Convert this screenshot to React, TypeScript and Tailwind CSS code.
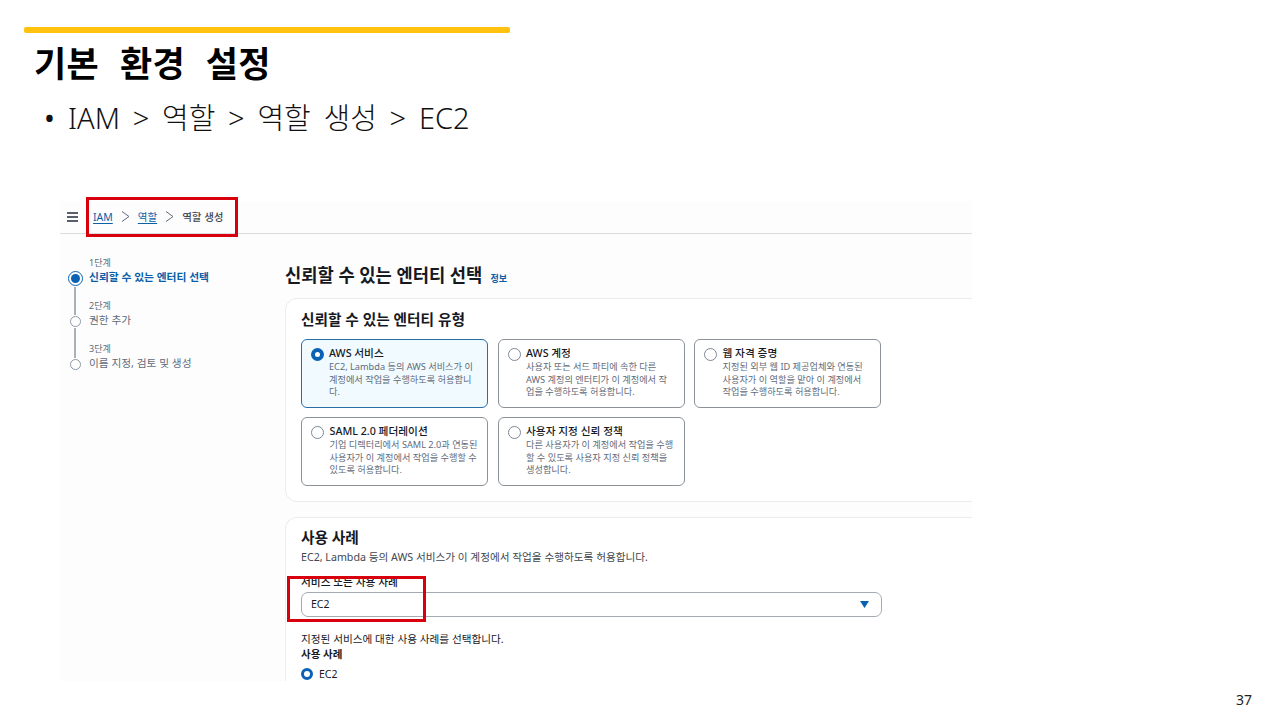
const FONT = "[font-family:'Noto_Sans','Noto_Sans_CJK_KR',sans-serif]";

interface TileProps {
  title: string;
  lines: string[];
  selected?: boolean;
}

const Radio = ({ selected, small }: { selected?: boolean; small?: boolean }) =>
  selected ? (
    <span className={small ? "block h-[12px] w-[12px] shrink-0 rounded-full border-[3.5px] border-[#0b62b4] bg-white" : "block h-[13px] w-[13px] shrink-0 rounded-full border-[4px] border-[#0b62b4] bg-white"} />
  ) : (
    <span className="block h-[13px] w-[13px] shrink-0 rounded-full border border-[#7d8998] bg-white" />
  );

const Tile = ({ title, lines, selected }: TileProps) => (
  <div
    className={
      selected
        ? "flex h-[69px] w-[187px] shrink-0 gap-[5.5px] rounded-[6px] border-[1.5px] border-[#2a6ea8] bg-[#f1faff] pl-[8.5px] pt-[6px]"
        : "flex h-[69px] w-[187px] shrink-0 gap-[5.5px] rounded-[6px] border border-[#8d9299] bg-white pl-[9px] pt-[6px]"
    }
  >
    <div className="pt-[2px]">
      <Radio selected={selected} />
    </div>
    <div>
      <div className="mb-[1px] text-[10.7px] leading-[14px] font-medium whitespace-nowrap text-[#16191f]">{title}</div>
      {lines.map((l) => (
        <div key={l} className="text-[9.2px] leading-[12.7px] whitespace-nowrap text-[#5f6b7a]">
          {l}
        </div>
      ))}
    </div>
  </div>
);

const Step = ({ label, title, active, last }: { label: string; title: string; active?: boolean; last?: boolean }) => (
  <div className="flex h-[43px] gap-[7px]">
    <div className="flex w-[14px] shrink-0 flex-col items-center">
      {active ? (
        <span className="mt-[15px] block h-[15px] w-[15px] shrink-0 rounded-full border-[1.5px] border-[#0b62b4] bg-white p-[2px]">
          <span className="block h-full w-full rounded-full bg-[#0b62b4]" />
        </span>
      ) : (
        <>
          <span className="mb-[1px] block h-[16px] w-[1.5px] shrink-0 bg-[#a8b0ba]" />
          <span className="block h-[11px] w-[11px] shrink-0 rounded-full border border-[#8d99a8] bg-white" />
        </>
      )}
      {!last && <span className="mt-[1px] block w-[1.5px] grow bg-[#a8b0ba]" />}
    </div>
    <div>
      <div className="text-[9px] leading-[13px] text-[#5f6b7a]">{label}</div>
      <div className={active ? "text-[10.75px] leading-[16px] font-bold text-[#0b5fa8]" : "text-[10.7px] leading-[16px] text-[#5f6b7a]"}>{title}</div>
    </div>
  </div>
);

export default function App() {
  return (
    <div className={`relative h-[720px] w-[1280px] overflow-hidden bg-white ${FONT}`}>
      {/* slide header */}
      <div className="pl-[24px] pt-[27px]">
        <div className="h-[6px] w-[486px] rounded-[2px] bg-[#ffc20e]" />
        <h1 className="mt-[8px] pl-[10px] text-[35px] leading-[46px] font-bold tracking-[0.3px] [word-spacing:11.5px] text-black">기본 환경 설정</h1>
        <div className="mt-[10px] flex items-center pl-[20px] text-[29px] leading-[42px] font-light [word-spacing:5.2px] text-[#111]">
          <span className="w-[24px] font-normal">•</span>
          <span>IAM &gt; 역할 &gt; 역할 생성 &gt; EC2</span>
        </div>
      </div>

      {/* console capture */}
      <div className="ml-[60px] mt-[62px] h-[480px] w-[912px] overflow-hidden bg-[#fdfdfd]">
        <div className="flex h-[33px] items-center gap-[8px] border-b border-[#dcdddf] pb-[1px] pl-[7px]">
          <svg width="11" height="10" viewBox="0 0 11 10" className="shrink-0">
            <path d="M0 1h11M0 5h11M0 9h11" stroke="#232b37" strokeWidth="1.4" />
          </svg>
          <div className="ml-[7px] flex items-center text-[10.5px] leading-[14px]">
            <span className="text-[#0b5fa8] underline underline-offset-2">IAM</span>
            <svg width="9" height="11" viewBox="0 0 9 11" className="mx-[8px]">
              <path d="M1 0.5L8 5.5L1 10.5" fill="none" stroke="#5f6b7a" strokeWidth="1" />
            </svg>
            <span className="text-[#0b5fa8] underline underline-offset-2">역할</span>
            <svg width="9" height="11" viewBox="0 0 9 11" className="mx-[8px]">
              <path d="M1 0.5L8 5.5L1 10.5" fill="none" stroke="#5f6b7a" strokeWidth="1" />
            </svg>
            <span className="font-medium text-[#414750]">역할 생성</span>
          </div>
        </div>

        <div className="flex">
          {/* wizard steps */}
          <div className="w-[225px] shrink-0 pl-[8px] pt-[22px]">
            <Step label="1단계" title="신뢰할 수 있는 엔터티 선택" active />
            <Step label="2단계" title="권한 추가" />
            <Step label="3단계" title="이름 지정, 검토 및 생성" last />
          </div>

          {/* main column */}
          <div className="w-[720px] shrink-0 pt-[29px]">
            <div className="flex items-baseline gap-[8px]">
              <h2 className="text-[17.7px] leading-[24px] font-bold text-[#16191f]">신뢰할 수 있는 엔터티 선택</h2>
              <span className="text-[9px] font-bold text-[#0b5fa8]">정보</span>
            </div>

            <section className="mt-[11px] h-[204px] rounded-[12px] border-[1.5px] border-[#ebecee] bg-white pl-[15px] pt-[10px]">
              <h3 className="text-[14.7px] leading-[20px] font-bold text-[#16191f]">신뢰할 수 있는 엔터티 유형</h3>
              <div className="mt-[10px] flex gap-[9.5px]">
                <Tile selected title="AWS 서비스" lines={["EC2, Lambda 등의 AWS 서비스가 이", "계정에서 작업을 수행하도록 허용합니", "다."]} />
                <Tile title="AWS 계정" lines={["사용자 또는 서드 파티에 속한 다른", "AWS 계정의 엔터티가 이 계정에서 작", "업을 수행하도록 허용합니다."]} />
                <Tile title="웹 자격 증명" lines={["지정된 외부 웹 ID 제공업체와 연동된", "사용자가 이 역할을 맡아 이 계정에서", "작업을 수행하도록 허용합니다."]} />
              </div>
              <div className="mt-[9px] flex gap-[9.5px]">
                <Tile title="SAML 2.0 페더레이션" lines={["기업 디렉터리에서 SAML 2.0과 연동된", "사용자가 이 계정에서 작업을 수행할 수", "있도록 허용합니다."]} />
                <Tile title="사용자 지정 신뢰 정책" lines={["다른 사용자가 이 계정에서 작업을 수행", "할 수 있도록 사용자 지정 신뢰 정책을", "생성합니다."]} />
              </div>
            </section>

            <section className="mt-[15px] h-[200px] rounded-t-[12px] border-[1.5px] border-b-0 border-[#ebecee] bg-white pl-[15px] pt-[9px]">
              <h3 className="text-[14.7px] leading-[20px] font-bold text-[#16191f]">사용 사례</h3>
              <p className="mt-[2px] text-[10.65px] leading-[16px] text-[#414750]">EC2, Lambda 등의 AWS 서비스가 이 계정에서 작업을 수행하도록 허용합니다.</p>
              <div className="mt-[10px] text-[10.7px] leading-[14px] font-medium text-[#16191f]">서비스 또는 사용 사례</div>
              <div className="mt-[3px] flex h-[25px] w-[581px] items-center justify-between rounded-[7px] border border-[#a6abb2] bg-white pl-[9px] pr-[12px]">
                <span className="text-[10.5px] text-[#16191f]">EC2</span>
                <svg width="9" height="7" viewBox="0 0 9 7">
                  <path d="M0 0h9L4.5 7z" fill="#0b62b4" />
                </svg>
              </div>
              <p className="mt-[14px] text-[10.65px] leading-[16px] text-[#16191f]">지정된 서비스에 대한 사용 사례를 선택합니다.</p>
              <div className="text-[10.5px] leading-[15px] font-bold text-[#16191f]">사용 사례</div>
              <div className="mt-[5px] flex items-center gap-[6px]">
                <Radio selected small />
                <span className="text-[10.5px] leading-[14px] text-[#16191f]">EC2</span>
              </div>
            </section>
          </div>
        </div>
      </div>

      {/* highlight boxes drawn over the capture */}
      <div className="absolute left-[86px] top-[197px] h-[40px] w-[152px] border-[3px] border-[#d9000d]" />
      <div className="absolute left-[287px] top-[576px] h-[46px] w-[139px] border-[3px] border-[#d9000d]" />

      <div className="absolute right-[28px] top-[690px] text-[14px] leading-[20px] text-[#222]">37</div>
    </div>
  );
}
